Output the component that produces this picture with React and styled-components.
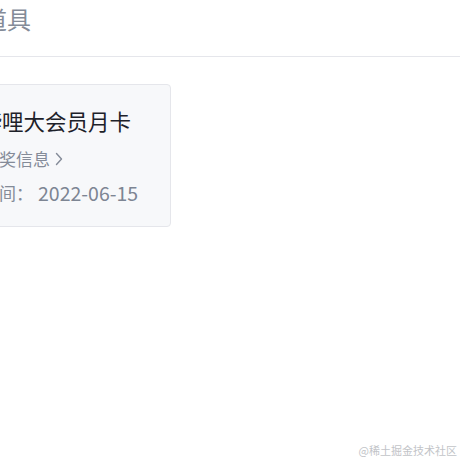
import React from 'react';
import styled, { createGlobalStyle } from 'styled-components';

const GlobalStyle = createGlobalStyle`
  html, body {
    margin: 0;
    padding: 0;
    background: #fff;
    overflow: hidden;
  }
  body {
    font-family: "Noto Sans CJK SC", "Noto Sans", sans-serif;
  }
`;

const Page = styled.div`
  width: 460px;
  height: 460px;
  position: relative;
  overflow: hidden;
`;

const Content = styled.div`
  margin-left: -66px;
`;

const Header = styled.div`
  height: 57px;
  border-bottom: 1px solid #e5e6eb;
  box-sizing: border-box;
  padding-top: 4px;
  padding-left: 1px;
`;

const HeaderTitle = styled.h2`
  margin: 0;
  font-size: 24px;
  line-height: 30px;
  font-weight: 400;
  color: #848b98;
`;

const Card = styled.div`
  margin-top: 27px;
  width: 237px;
  background: #f7f8fa;
  border: 1px solid #e5e6eb;
  border-radius: 4px;
  padding: 21px 0 19px 13px;
  box-sizing: border-box;
`;

const CardTitle = styled.div`
  font-size: 21.5px;
  line-height: 30px;
  color: #1d2129;
  margin-left: -10.5px;
  white-space: nowrap;
`;

const InfoLink = styled.div`
  margin-top: 11px;
  display: flex;
  align-items: center;
  gap: 5px;
  font-size: 17px;
  line-height: 24px;
  color: #848b98;
  white-space: nowrap;
`;

const DateRow = styled.div`
  margin-top: 8px;
  display: flex;
  align-items: center;
  font-size: 17px;
  line-height: 28px;
  color: #848b98;
  white-space: nowrap;
`;

const DateValue = styled.span`
  margin-left: 5px;
  font-size: 19.5px;
  color: #7d8593;
`;

const Watermark = styled.div`
  position: absolute;
  right: 3px;
  bottom: 4px;
  font-size: 11px;
  line-height: 12px;
  color: #c2c4c8;
`;

const Chevron = () => (
  <svg width="8" height="14" viewBox="0 0 8 14">
    <polyline
      points="1.5 1.5 6.5 7 1.5 12.5"
      fill="none"
      stroke="currentColor"
      strokeWidth="1.4"
      strokeLinecap="round"
      strokeLinejoin="round"
    />
  </svg>
);

export default function App() {
  return (
    <Page>
      <GlobalStyle />
      <Content>
        <Header>
          <HeaderTitle>我的道具</HeaderTitle>
        </Header>
        <Card>
          <CardTitle>哔哩哔哩大会员月卡</CardTitle>
          <InfoLink>
            查看领奖信息
            <Chevron />
          </InfoLink>
          <DateRow>
            到期时间：
            <DateValue>2022-06-15</DateValue>
          </DateRow>
        </Card>
      </Content>
      <Watermark>@稀土掘金技术社区</Watermark>
    </Page>
  );
}
